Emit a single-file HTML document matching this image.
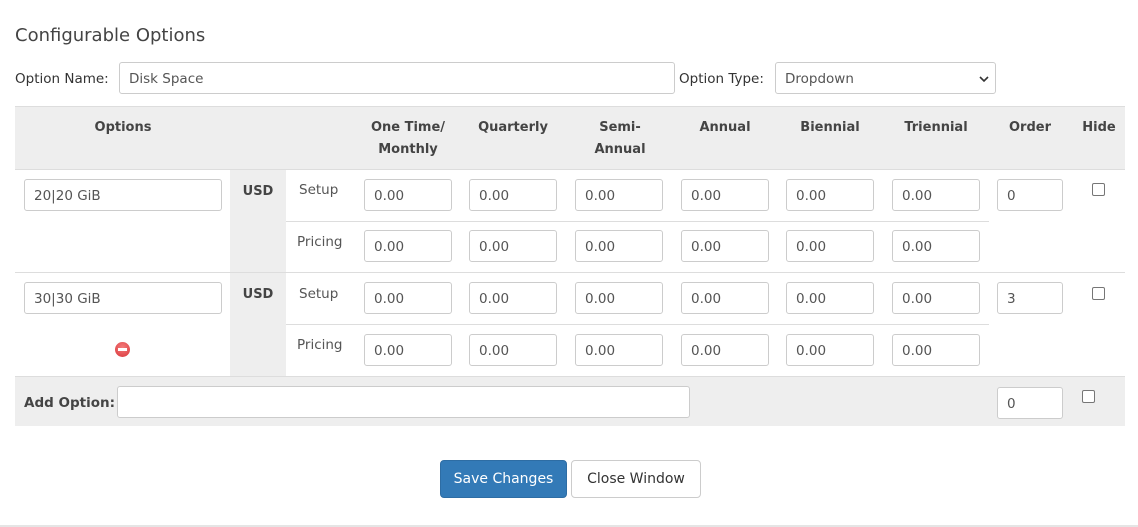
<!DOCTYPE html>
<html><head><style>
*{box-sizing:border-box;margin:0;padding:0}
body{width:1138px;height:527px;background:#fff;font-family:"DejaVu Sans","Liberation Sans",sans-serif;font-size:13.5px;color:#333;position:relative;overflow:hidden}
.a{position:absolute}
.in{position:absolute;border:1px solid #ccc;border-radius:3px;background:#fff;height:32px;padding:0 9px;line-height:32px;color:#555;font-size:13.5px}
.bg{position:absolute;background:#eee}
.h{position:absolute;font-weight:bold;color:#444;text-align:center;line-height:22px;font-size:13px}
.ln{position:absolute;height:1px;background:#ddd}
.cb{position:absolute;width:13px;height:13px;border:1px solid #767676;border-radius:2px;background:#fff}
.lb{position:absolute;color:#555}
</style></head><body>
<div class="a" style="left:15px;top:25px;font-size:18px;color:#444">Configurable Options</div>
<div class="a" style="left:15px;top:71px;color:#333">Option Name:</div>
<div class="in" style="left:119px;top:62px;width:556px">Disk Space</div>
<div class="a" style="left:679px;top:71px;color:#333">Option Type:</div>
<div class="in" style="left:775px;top:62px;width:221px">Dropdown<svg style="position:absolute;right:6px;top:12px" width="10" height="8" viewBox="0 0 10 8"><path d="M1 2l4 4 4-4" fill="none" stroke="#333" stroke-width="1.6"/></svg></div>

<div class="bg" style="left:15px;top:106px;width:1110px;height:63px;border-top:1px solid #ddd"></div>
<div class="ln" style="left:15px;top:169px;width:1110px"></div>
<div class="bg" style="left:230px;top:170px;width:56px;height:206px"></div>
<div class="ln" style="left:15px;top:272px;width:1110px"></div>
<div class="ln" style="left:286px;top:221px;width:703px"></div>
<div class="ln" style="left:286px;top:324px;width:703px"></div>
<div class="bg" style="left:15px;top:376px;width:1110px;height:50px;border-top:1px solid #ddd"></div>

<div class="h" style="left:63px;top:117px;width:120px">Options</div>
<div class="h" style="left:353px;top:117px;width:110px">One Time/<br>Monthly</div>
<div class="h" style="left:463px;top:117px;width:100px">Quarterly</div>
<div class="h" style="left:585px;top:117px;width:70px">Semi-<br>Annual</div>
<div class="h" style="left:675px;top:117px;width:100px">Annual</div>
<div class="h" style="left:780px;top:117px;width:100px">Biennial</div>
<div class="h" style="left:886px;top:117px;width:100px">Triennial</div>
<div class="h" style="left:990px;top:117px;width:80px">Order</div>
<div class="h" style="left:1074px;top:117px;width:50px">Hide</div>

<div class="in" style="left:24px;top:179px;width:198px">20|20 GiB</div>
<div class="in" style="left:24px;top:282px;width:198px">30|30 GiB</div>
<div class="h" style="left:230px;top:181px;width:56px">USD</div>
<div class="h" style="left:230px;top:284px;width:56px">USD</div>
<div class="lb" style="left:299px;top:182px">Setup</div>
<div class="lb" style="left:297px;top:234px">Pricing</div>
<div class="lb" style="left:299px;top:286px">Setup</div>
<div class="lb" style="left:297px;top:337px">Pricing</div>
<div class="a" style="left:115px;top:342px;width:15px;height:15px;border-radius:50%;background:radial-gradient(circle at 50% 35%,#f47c7c,#d9363a)"><div style="position:absolute;left:3px;top:6px;width:9px;height:3px;background:#fff"></div></div>

<div id="p"></div>
<div class="in" style="left:997px;top:179px;width:66px">0</div>
<div class="in" style="left:997px;top:282px;width:66px">3</div>
<div class="cb" style="left:1092px;top:183px"></div>
<div class="cb" style="left:1092px;top:287px"></div>

<div class="a" style="left:24px;top:395px;font-weight:bold;color:#444">Add Option:</div>
<div class="in" style="left:117px;top:386px;width:573px"></div>
<div class="in" style="left:997px;top:387px;width:66px">0</div>
<div class="cb" style="left:1082px;top:390px"></div>

<div class="a" style="left:440px;top:460px;width:127px;height:38px;background:#337ab7;border:1px solid #2e6da4;border-radius:4px;color:#fff;text-align:center;line-height:37px;font-size:14px">Save Changes</div>
<div class="a" style="left:571px;top:460px;width:130px;height:38px;background:#fff;border:1px solid #ccc;border-radius:4px;color:#333;text-align:center;line-height:37px;font-size:14px">Close Window</div>
<div class="ln" style="left:0;top:525px;width:1138px;height:2px;background:#e5e5e5"></div>
<script>
var xs=[364,469,575,681,786,892],ys=[179,230,282,334],h='';
ys.forEach(function(y){xs.forEach(function(x){h+='<div class="in" style="left:'+x+'px;top:'+y+'px;width:88px">0.00</div>';});});
document.getElementById('p').outerHTML=h;
</script>
</body></html>
